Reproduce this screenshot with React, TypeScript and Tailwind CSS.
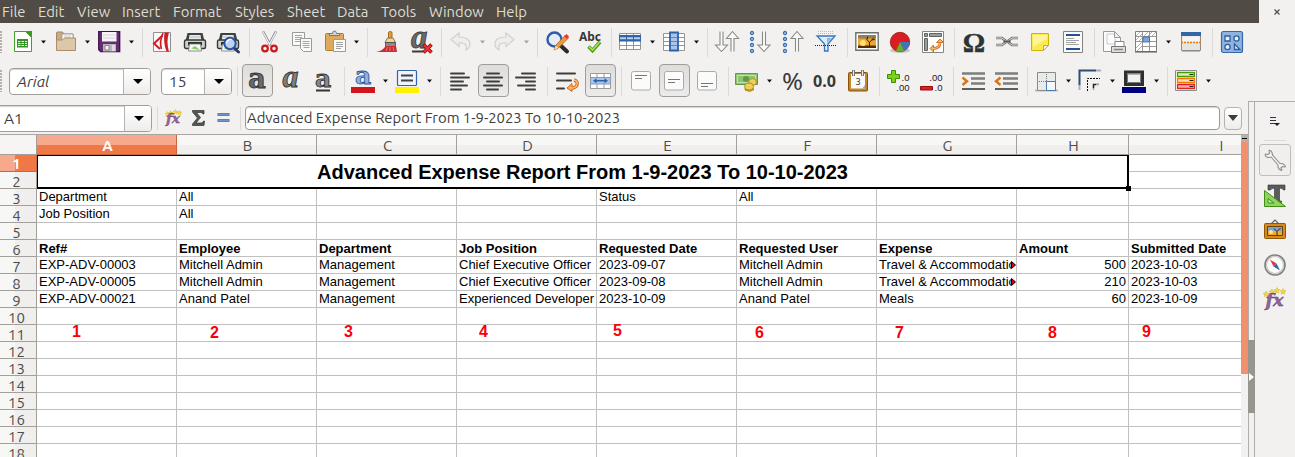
import React from "react";

type Kids = { children?: React.ReactNode };

const Svg = ({ children }: Kids) => (
  <svg width="24" height="24" viewBox="0 0 24 24" fill="none" className="block shrink-0 overflow-visible">
    {children}
  </svg>
);

const Tool = ({ children, on }: Kids & { on?: boolean }) => (
  <div className="relative flex h-[34px] w-[33px] shrink-0 items-center pl-1">
    {on && <div className="absolute top-0 left-px h-[33px] w-[31px] rounded-[4px] border border-[#a09d99] bg-gradient-to-b from-[#dfdddb] to-[#ecebea]" />}
    <div className="relative">
      <Svg>{children}</Svg>
    </div>
  </div>
);

const Drop = ({ children, dim }: Kids & { dim?: boolean }) => (
  <div className="flex h-[34px] w-11 shrink-0 items-center pl-1">
    <Svg>{children}</Svg>
    <svg width="5" height="4" viewBox="0 0 5 4" className={dim ? "ml-[7px] text-[#a3a19e]" : "ml-[7px] text-[#111]"}>
      <path d="M0 .5h5L2.5 3.5z" fill="currentColor" />
    </svg>
  </div>
);

const Sep = () => (
  <div className="flex w-2 shrink-0 justify-center">
    <div className="h-[29px] w-px bg-[#dcdad8]" />
  </div>
);

const Handle = () => (
  <div className="h-[22px] w-[6px] shrink-0">
    <div className="h-full w-[2px] bg-[repeating-linear-gradient(#b5b2ae_0px,#b5b2ae_2px,#f2f1f0_2px,#f2f1f0_3px)]" />
  </div>
);

const menus: [string, string][] = [
  ["File", "w-[36px]"],
  ["Edit", "w-[39px]"],
  ["View", "w-[45px]"],
  ["Insert", "w-[51px]"],
  ["Format", "w-[62px]"],
  ["Styles", "w-[52px]"],
  ["Sheet", "w-[50px]"],
  ["Data", "w-[44px]"],
  ["Tools", "w-[48px]"],
  ["Window", "w-[67px]"],
  ["Help", "w-[40px]"],
];

const MenuBar = () => (
  <div className="flex h-[23px]">
    <div className="flex w-[1259px] items-center bg-[#504c45] pt-px pl-[2px] text-[14.8px] leading-[22px] text-[#dfdbd2]">
      {menus.map(([m, w]) => (
        <span key={m} className={w + " shrink-0 whitespace-nowrap"}>
          {m}
        </span>
      ))}
    </div>
    <div className="flex flex-1 items-center justify-center">
      <svg width="6" height="6" viewBox="0 0 6 6" stroke="#55524d" strokeWidth="1.3">
        <path d="M.5.5l5 5M5.5.5l-5 5" />
      </svg>
    </div>
  </div>
);

const Printer = () => (
  <>
    <path d="M4.500 3h15l2 8H2.500z" fill="#3f4241" />
    <path d="M6.500 5h11l.8 5H5.700z" fill="#e9ebe9" />
    <path d="M6.500 7h11" stroke="#bbb" />
    <rect x="1.500" y="10" width="21" height="8.500" rx="1.500" fill="#cfd1cf" stroke="#353836" strokeWidth="1.400" />
    <path d="M5 12h14v3.500H5z" fill="#2d302e" />
    <path d="M6.500 14h11l1 7h-13z" fill="#f7f7f7" stroke="#777" strokeWidth=".8" />
    <path d="M8 18.500l4-2.500 5 4z" fill="#7ccf55" />
  </>
);

const ArrowDown = ({ x }: { x: number }) => (
  <path d={`M${x - 1.5} 1.500v13.500h-4.500L${x} 21.500l6-6.500h-4.500V1.500`} fill="#fafafa" stroke="#888a85" strokeWidth="1.100" />
);
const ArrowUp = ({ x }: { x: number }) => (
  <path d={`M${x - 1.5} 21.500V8.500h-4.500L${x} 1.500l6 7h-4.500v13`} fill="#fafafa" stroke="#888a85" strokeWidth="1.100" />
);
const Beads = () => (
  <g stroke="#3a6cb0" strokeWidth="1.300" fill="#dce9f8">
    <circle cx="4" cy="3" r="1.500" />
    <circle cx="4" cy="9" r="1.500" />
    <circle cx="4" cy="15" r="1.500" />
    <circle cx="4" cy="21" r="1.500" />
  </g>
);

const StandardBar = () => (
  <div className="flex h-[38px] items-center">
    <Handle />
    <Drop>
      <path d="M4.500 1.500h11l6 6v14h-17z" fill="#fff" stroke="#43a02a" />
      <path d="M15 1h7v7z" fill="#3d9a25" />
      <path d="M7 9h11v8.500H7z" fill="#37912a" />
      <path d="M8 11h2.500v1H8zm3.500 0H14v1h-2.500zM15 11h2v1h-2zM8 13h2.500v1H8zm3.500 0H14v1h-2.500zM15 13h2v1h-2zM8 15h2.500v1H8zm3.500 0H14v1h-2.500zM15 15h2v1h-2z" fill="#eaf8e4" />
    </Drop>
    <Drop>
      <path d="M2.500 19V3q0-1 1-1h5l1.500 2h9v14z" fill="#c5ac88" stroke="#a28560" />
      <path d="M8 4h11v7H8z" fill="#fafafa" stroke="#999" strokeWidth=".8" />
      <path d="M10 6h7M10 8h7" stroke="#bbb" strokeWidth=".8" />
      <path d="M2.500 20.500V10h6l2-2h11v12.500z" fill="#dcc8a9" stroke="#ab8e68" />
    </Drop>
    <Drop>
      <path d="M.7 1.700h21v20h-19l-2-2z" fill="#642e73" stroke="#3f1350" strokeWidth="1.300" />
      <path d="M4 2h14.500v9.500H4z" fill="#f7f4f8" />
      <path d="M5 5h12.500M5 8h12.500" stroke="#d5d0d8" />
      <path d="M5 14h13v7.500H5z" fill="#b9b6bb" />
      <path d="M7 15.500h4V20H7z" fill="#f4f4f4" stroke="#777" strokeWidth=".8" />
      <path d="M14 15h3v6h-3z" fill="#ddd" />
    </Drop>
    <Sep />
    <Tool>
      <path d="M3.500 2.500h17v19h-17z" fill="#fafafa" stroke="#8f9190" />
      <path d="M12.500 5.500L4 13.500l6 5.500" stroke="#cf1d22" strokeWidth="2" />
      <path d="M13 3q-4 9-1.500 16" stroke="#cf1d22" strokeWidth="1.600" />
      <path d="M14.500 2.500h4.500q-3 9 0 19h-2.500q-3.500-9-2-19z" fill="#cf1d22" />
    </Tool>
    <Tool>
      <Printer />
    </Tool>
    <Tool>
      <Printer />
      <path d="M18 18l4.500 4" stroke="#283b65" strokeWidth="3" strokeLinecap="round" />
      <circle cx="14" cy="13.500" r="5.700" fill="#bcd3ef" stroke="#2752a0" strokeWidth="2" />
      <path d="M10.500 13q1-4 5-3.500" stroke="#fff" strokeWidth="1.300" />
    </Tool>
    <Sep />
    <Tool>
      <path d="M6 1.500l7.500 14M19 1.500l-7.500 14" stroke="#8b8e8c" strokeWidth="2.600" />
      <path d="M6 2l7 13M19 2l-7 13" stroke="#f4f4f4" strokeWidth="1.200" />
      <circle cx="8" cy="18.500" r="2.800" stroke="#cb1a1e" strokeWidth="2.200" />
      <circle cx="17" cy="18.500" r="2.800" stroke="#cb1a1e" strokeWidth="2.200" />
    </Tool>
    <Tool>
      <path d="M2.500 2.500h12v13h-12z" fill="#fafafa" stroke="#9a9c99" />
      <path d="M5 5.500h7M5 7.500h7M5 9.500h5M5 11.500h5" stroke="#a5a7a4" />
      <path d="M10.500 8.500h11v13h-8l-3-3z" fill="#fafafa" stroke="#9a9c99" />
      <path d="M12.500 11.500h7M12.500 13.500h7M12.500 15.500h7M13.500 17.500h6" stroke="#a5a7a4" />
    </Tool>
    <Drop>
      <rect x="2.500" y="3.500" width="18" height="17" rx="1" fill="#dfa95b" stroke="#b17c2c" />
      <path d="M6.500 5.500v-2h3q0-2.500 2-2.500t2 2.500h3v2z" fill="#d5d7d3" stroke="#777" />
      <path d="M10.500 9.500h12v12h-12z" fill="#fafafa" stroke="#9a9c99" />
      <path d="M13 12.500h7M13 14.500h7M13 16.500h7M13 18.500h5" stroke="#a0a29f" />
    </Drop>
    <Sep />
    <Tool>
      <rect x="13.500" y="1.500" width="3.500" height="7" rx="1.500" fill="#e0a03a" stroke="#a2691a" />
      <path d="M12.500 8h5.500l2.500 4.500h-10.500z" fill="#f0d59b" stroke="#8c7241" />
      <path d="M10.500 12.500h10v4h-10z" fill="#8c8c8c" stroke="#444" strokeWidth=".8" />
      <path d="M10.500 16h10.500l1 6H1q7-1 9.500-6z" fill="#c82b34" />
      <path d="M12.500 17l-1.500 4M15 17v4M18 17l1 4" stroke="#f28a8e" strokeWidth=".8" />
    </Tool>
    <Tool>
      <text x="3" y="18" fontFamily="Liberation Serif" fontStyle="italic" fontWeight="700" fontSize="33" fill="#6a6a6a" stroke="#3c3c3c" strokeWidth=".8">a</text>
      <path d="M4 21.500h11" stroke="#3c3c3c" strokeWidth="2" />
      <path d="M15.500 14.500l8 8M23.500 14.500l-8 8" stroke="#a80000" strokeWidth="3.600" />
      <path d="M16 15l7 7M23 15l-7 7" stroke="#ee3432" strokeWidth="2" />
    </Tool>
    <Sep />
    <Drop dim>
      <path d="M2 9.500l8-6.500v4q11 0 11 7 0 4-4 6 2-8-7-7v3.500z" fill="#efeeec" stroke="#d1d0cd" strokeWidth="1.200" />
    </Drop>
    <Drop dim>
      <path d="M21 9.500L13 3v4q-11 0-11 7 0 4 4 6-2-8 7-7v3.500z" fill="#efeeec" stroke="#d1d0cd" strokeWidth="1.200" />
    </Drop>
    <Sep />
    <Tool>
      <path d="M14 14l8 7.500" stroke="#2a2a2a" strokeWidth="4" strokeLinecap="round" />
      <circle cx="9.500" cy="9.500" r="7" fill="#e6ecf5" stroke="#2f5ba7" strokeWidth="2.400" />
      <path d="M9 20l2-5L20.500 5l3 3-10 10z" fill="#eb9b3a" stroke="#a4621a" strokeWidth=".8" />
      <path d="M19 6.500L21.500 4l2.500 2.500-2 2.500z" fill="#e23a3a" />
      <path d="M9 20l1.800-4.500 2.500 2.300z" fill="#f4dfb5" />
    </Tool>
    <Tool>
      <text x="1" y="11" fontFamily="Noto Sans" fontWeight="700" fontSize="12" textLength="22" lengthAdjust="spacingAndGlyphs" fill="#383838">Abc</text>
      <path d="M10.500 16.500l4 4 7.500-8.500" stroke="#4c9a18" strokeWidth="3.600" />
      <path d="M11 16.700l3.500 3.300 7-7.800" stroke="#a8e060" strokeWidth="1.600" />
    </Tool>
    <Sep />
    <Drop>
      <path d="M.5 3.500h21v16H.500z" fill="#fff" stroke="#949693" />
      <path d="M7.500 3v17M14.500 3v17M0 15.500h22" stroke="#949693" />
      <path d="M0 5h22v6.500H0z" fill="#2e62aa" />
      <path d="M1 8.200h20" stroke="#b7d0ee" strokeWidth="2" strokeDasharray="6 1" />
    </Drop>
    <Drop>
      <path d="M.5 3.500h21v17H.500z" fill="#fff" stroke="#949693" />
      <path d="M0 7.500h22M0 11.500h22M0 15.500h22" stroke="#949693" />
      <path d="M7 2.500h8v18H7z" fill="#a9c6ea" stroke="#2e62aa" strokeWidth="1.800" />
      <path d="M8 7.500h6M8 11.500h6M8 15.500h6" stroke="#5d8bc8" />
    </Drop>
    <Sep />
    <Tool>
      <ArrowDown x={6.5} />
      <ArrowUp x={17.5} />
    </Tool>
    <Tool>
      <Beads />
      <ArrowDown x={16} />
    </Tool>
    <Tool>
      <Beads />
      <ArrowUp x={16} />
    </Tool>
    <Tool>
      <path d="M4 1.500h15M4 3.500h15" stroke="#bbb" strokeDasharray="1 1" />
      <path d="M3 6h18l-7 8v7h-3.500v-7z" fill="#dcebfa" stroke="#3b75bd" strokeWidth="1.300" />
      <path d="M13 8h5l-5 5z" fill="#8bb5e4" />
      <path d="M1 15.500h22" stroke="#222" strokeDasharray="1 1" />
    </Tool>
    <Sep />
    <Tool>
      <path d="M.8 2.800h22.400v17.400H.8z" fill="#fff" stroke="#6f716e" strokeWidth="1.400" />
      <path d="M3 5h18v13H3z" fill="#efa62c" />
      <path d="M3 5h18v3.500H3z" fill="#8d8160" />
      <path d="M3 15.500h18V18H3z" fill="#4d3006" />
      <circle cx="8" cy="13" r="3" fill="#ffe078" />
      <path d="M14.500 17v-5M14.500 12.500l-3.500-4M14.500 12.500l4.500-5M12.500 9V6.500M16.500 10l3.500-.5" stroke="#2c1a06" strokeWidth=".9" />
    </Tool>
    <Tool>
      <ellipse cx="12" cy="20.500" rx="10" ry="2.500" fill="#c7c5c3" />
      <circle cx="12" cy="12" r="9.700" fill="#d81e20" stroke="#a01010" strokeWidth=".8" />
      <path d="M12 12h9.700q0 6-5.700 9z" fill="#4473b8" />
      <path d="M12 12l4 9q-4 1.500-8 0z" fill="#62b52b" />
    </Tool>
    <Tool>
      <path d="M1.500 1.500h21v21h-21z" fill="#fff" stroke="#858784" />
      <path d="M3.500 3.500h3v3h-3zM8.500 3.500h12v3h-12zM3.500 8.500h3v12h-3z" fill="#9b9d9a" stroke="#626461" />
      <path d="M12 18.500q7 0 7-6" stroke="#d9731a" strokeWidth="2.800" />
      <path d="M9 18.500l3.500-3.500v7zM19 9l-3.500 3.500h7z" fill="#fbb066" stroke="#d9731a" />
      <path d="M12 18.500q7 0 7-6" stroke="#fbc288" />
    </Tool>
    <Sep />
    <Tool>
      <text x="12" y="21.500" textAnchor="middle" fontFamily="Liberation Serif" fontWeight="700" fontSize="28" fill="#2e3436" stroke="#2e3436" strokeWidth=".4">Ω</text>
    </Tool>
    <Tool>
      <path d="M1 8h6l4 3M1 15h6l4-3M23 8h-6l-4 3M23 15h-6l-4-3" stroke="#6d6f6c" strokeWidth="2.600" />
      <path d="M1 8h6l4 3M1 15h6l4-3M23 8h-6l-4 3M23 15h-6l-4-3" stroke="#dcdcdc" />
      <path d="M8.500 11.500h7" stroke="#555" strokeWidth="2" />
    </Tool>
    <Tool>
      <path d="M3.500 3.500h17v12l-5 5h-12z" fill="#fce94f" stroke="#cdb20a" />
      <path d="M5 5h14v4L5 17z" fill="#fff39a" />
      <path d="M20.500 15.500l-5 5v-5z" fill="#f8f8e8" stroke="#cdb20a" />
    </Tool>
    <Tool>
      <path d="M2.500 1.500h19v21h-19z" fill="#fafafa" stroke="#81837f" />
      <path d="M5 5h14M5 19h14" stroke="#27509a" strokeWidth="2.200" />
      <path d="M5 8.500h8M5 10.500h13M5 12.500h10M5 14.500h13" stroke="#999" strokeWidth=".9" />
    </Tool>
    <Sep />
    <Tool>
      <path d="M1.500 1.500h11l6 6v14h-17z" fill="#fbfbfb" stroke="#999b98" />
      <path d="M5 4h8v10H5z" stroke="#ccc" />
      <path d="M12.500 1.500v6h6z" fill="#eee" stroke="#999b98" />
      <path d="M13 11.500h9v5h-9z" fill="#fff" stroke="#888" />
      <path d="M9.500 16.500h14v6h-14z" fill="#ddd" stroke="#777" />
      <path d="M12 19.500h9" stroke="#888" strokeWidth="1.500" />
    </Tool>
    <Drop>
      <path d="M.5 1.500h21v20H.500z" fill="#fff" stroke="#7d7f7c" />
      <path d="M1 6l4-4M1 10l6-6M3 12l5-5M1 18l6-6M1 22l6-6M9 6l4-4M13 6l4-4M17 6l4-4" stroke="#8cb0dc" strokeWidth=".9" />
      <path d="M7.500 2v19M14.500 2v19M1 6.500h20M1 11.500h20M8 16.500h13" stroke="#999" />
      <path d="M8 7h6.500v5H8z" fill="#7ea6d9" stroke="#3465a4" strokeWidth=".8" />
      <path d="M0 22h22" stroke="#555" />
    </Drop>
    <Tool>
      <path d="M2.500 2.500h19v18h-19z" fill="#e4e4e3" stroke="#8a8c89" />
      <path d="M2 2h20v4H2z" fill="#3465a4" />
      <path d="M3.500 6.500h17v5h-17z" fill="#f4f4f4" />
      <path d="M2 12.500h21" stroke="#f57900" strokeWidth="1.300" strokeDasharray="2 1" />
      <path d="M3 21.500h18" stroke="#bbb" />
    </Tool>
    <Sep />
    <Tool>
      <rect x="1.500" y="1.500" width="21" height="21" rx="2" fill="#8fb3df" stroke="#3667a8" strokeWidth="1.200" />
      <g stroke="#2d5d9f" strokeWidth="1.300" fill="#e8f1fb">
        <path d="M5 6h5v5H5zM14.500 14v5.500H20z" />
        <circle cx="16.500" cy="8.500" r="2.600" />
        <circle cx="7.500" cy="17" r="2.600" />
      </g>
    </Tool>
  </div>
);

const Bars = ({ rows }: { rows: [number, number][] }) => (
  <>
    {rows.map(([x, w], i) => (
      <path key={i} d={`M${x} ${4.5 + i * 4}h${w}`} stroke="#3e403f" strokeWidth="2" strokeLinecap="round" />
    ))}
  </>
);

const Combo = ({ label, box, arrow, italic }: { label: string; box: string; arrow: string; italic?: boolean }) => (
  <div className={box + " flex h-[27px] shrink-0 items-stretch overflow-hidden border border-[#a19e9a] bg-white shadow-[inset_0_1px_1px_#d5d3d1]"}>
    <span className={(italic ? "italic " : "") + "flex-1 pl-[7px] text-[15.5px] leading-[25px] text-[#3c3c3c]"}>{label}</span>
    <div className={arrow + " flex items-center justify-center border-l border-[#b5b2ae] bg-gradient-to-b from-white to-[#eeedec] pl-px"}>
      <svg width="10" height="5" viewBox="0 0 10 5">
        <path d="M0 0h10L5 5z" fill="#000" />
      </svg>
    </div>
  </div>
);

const Align = ({ y }: { y: number }) => (
  <>
    <rect x="2.500" y="2.500" width="19" height="18.500" rx="2" fill="#fbfbfb" stroke="#a9aba8" />
    <path d={`M6 ${y}h12M6 ${y + 3}h7`} stroke="#777" />
  </>
);

const FormatBar = () => (
  <div className="flex h-[40px] items-center">
    <Handle />
    <Combo label="Arial" italic box="ml-[3px] w-[142px] rounded-[4px]" arrow="w-[27px]" />
    <Combo label="15" box="ml-[10px] w-[71px] rounded-[4px]" arrow="w-[27px]" />
    <div className="ml-[1px] flex items-center">
      <Sep />
      <Tool on>
        <text x="12" y="18.500" textAnchor="middle" fontFamily="DejaVu Serif" fontWeight="700" fontSize="27" fill="#6a6a6a" stroke="#333" strokeWidth=".9">a</text>
      </Tool>
      <Tool>
        <text x="12.500" y="18" textAnchor="middle" fontFamily="Liberation Serif" fontStyle="italic" fontWeight="700" fontSize="32" fill="#808080" stroke="#333" strokeWidth=".9">a</text>
      </Tool>
      <Tool>
        <text x="12" y="18" textAnchor="middle" fontFamily="DejaVu Serif" fontWeight="700" fontSize="25" fill="#888" stroke="#333" strokeWidth=".9">a</text>
        <path d="M5 21.500h14" stroke="#333" strokeWidth="2" />
      </Tool>
      <Sep />
      <Drop>
        <text x="11" y="15" textAnchor="middle" fontFamily="DejaVu Serif" fontWeight="700" fontSize="25" fill="#8db2de" stroke="#2c5ca0" strokeWidth=".9">a</text>
        <path d="M-1 18h24v6H-1z" fill="#d0151c" />
      </Drop>
      <Drop>
        <rect x="1.500" y="1.500" width="19" height="15" rx="1" fill="#eef4fb" stroke="#3465a4" strokeWidth="1.200" />
        <path d="M5 6.500h12M5 11.500h12" stroke="#444" strokeWidth="1.800" />
        <path d="M-1 18h24v6H-1z" fill="#fff200" />
      </Drop>
      <Sep />
      <Tool>
        <Bars rows={[[3, 13], [3, 18], [3, 12], [3, 16], [3, 10]]} />
      </Tool>
      <Tool on>
        <Bars rows={[[6, 12], [3, 18], [6, 12], [3, 18], [6, 11]]} />
      </Tool>
      <Tool>
        <Bars rows={[[8, 13], [2, 19], [12, 9], [4, 17], [12, 9]]} />
      </Tool>
      <Sep />
      <Tool>
        <path d="M2 4.500h18M2 11.500h14M2 19.500h7" stroke="#3e403f" strokeWidth="2" strokeLinecap="round" />
        <path d="M19 11q4 1 3 5-1 3-6 3" stroke="#cf6a12" strokeWidth="3.400" />
        <path d="M12 19l5-4.500v8z" fill="#fbb066" stroke="#cf6a12" />
        <path d="M19 11q4 1 3 5-1 3-6 3" stroke="#fcc083" strokeWidth="1.300" />
      </Tool>
      <Tool on>
        <path d="M2.500 4.500h20v15h-20z" fill="#fff" stroke="#999b98" />
        <path d="M9 4v16M16 4v16" stroke="#999b98" />
        <path d="M2.500 8.500h20v6.500h-20z" fill="#a9c6ea" stroke="#8a9bb0" />
        <path d="M7 11.700h11" stroke="#2e5ea4" strokeWidth="1.500" />
        <path d="M5 11.700l3.500-2.500v5zM20 11.700l-3.500-2.500v5z" fill="#2e5ea4" />
      </Tool>
      <Sep />
      <Tool>
        <Align y={6.5} />
      </Tool>
      <Tool on>
        <Align y={10.5} />
      </Tool>
      <Tool>
        <Align y={14.5} />
      </Tool>
      <Sep />
      <Drop>
        <path d="M-.5 4.500h22v11h-22z" fill="#8dc373" stroke="#5f9a46" />
        <path d="M1.500 6.500h18v7h-18z" stroke="#c3e3b2" />
        <circle cx="10" cy="10" r="3" fill="#5f9a46" />
        <g fill="#edcf5a" stroke="#a98618" strokeWidth=".9">
          <ellipse cx="16.500" cy="13" rx="4" ry="3.500" />
          <ellipse cx="13" cy="17.500" rx="4.300" ry="3.500" />
          <path d="M9 19.500q4 3.500 8.500 0v1.500q-4 3-8.500 0z" />
        </g>
      </Drop>
      <Tool>
        <text x="12.500" y="21" textAnchor="middle" fontFamily="Noto Sans" fontSize="24" textLength="21" lengthAdjust="spacingAndGlyphs" fill="#3a3a3a">%</text>
      </Tool>
      <Tool>
        <text x="11.500" y="17.500" textAnchor="middle" fontFamily="Noto Sans" fontWeight="700" fontSize="16" textLength="23" lengthAdjust="spacingAndGlyphs" fill="#383838">0.0</text>
      </Tool>
      <Tool>
        <rect x="2.500" y="3.500" width="19" height="18.500" rx="1" fill="#c4852c" stroke="#85530d" />
        <path d="M5 5h14v14.500H5z" fill="#fafafa" />
        <path d="M7.500 1v6M16.500 1v6" stroke="#777" strokeWidth="3" />
        <path d="M7.500 1.500v5M16.500 1.500v5" stroke="#eee" />
        <text x="12" y="16" textAnchor="middle" fontFamily="Noto Sans" fontSize="9" fill="#333">3</text>
        <path d="M19 16l-3 3.500h3z" fill="#aaa" />
      </Tool>
      <Sep />
      <Tool>
        <path d="M4.500 1.500h4v4h4v4h-4v4h-4v-4H.5v-4h4z" fill="#79d419" stroke="#3f8d06" />
        <text x="22.500" y="12" textAnchor="end" fontFamily="Liberation Sans" fontSize="9.500" fill="#222">.0</text>
        <text x="22.500" y="22" textAnchor="end" fontFamily="Liberation Sans" fontSize="9.500" fill="#222">.00</text>
      </Tool>
      <Tool>
        <path d="M.5 17.500h12v3.500H.500z" fill="#dd1e22" stroke="#9c0a0a" />
        <text x="22.500" y="12" textAnchor="end" fontFamily="Liberation Sans" fontSize="9.500" fill="#222">.00</text>
        <text x="22.500" y="22" textAnchor="end" fontFamily="Liberation Sans" fontSize="9.500" fill="#222">.0</text>
      </Tool>
      <Sep />
      <Tool>
        <path d="M1 4.500h23M10 9.500h14M10 14.500h14M1 20h23" stroke="#3e403f" strokeWidth="2.200" />
        <path d="M1 4.500h23M10 9.500h14M10 14.500h14M1 20h23" stroke="#aaa" strokeWidth=".6" />
        <path d="M1.500 8.500l4.500 3.700-4.500 3.800" stroke="#d9731a" strokeWidth="2.400" />
      </Tool>
      <Tool>
        <path d="M1 4.500h23M9 9.500h15M9 14.500h15M1 20h23" stroke="#3e403f" strokeWidth="2.200" />
        <path d="M1 4.500h23M9 9.500h15M9 14.500h15M1 20h23" stroke="#aaa" strokeWidth=".6" />
        <path d="M6.500 8.500L2 12.200 6.500 16" stroke="#d9731a" strokeWidth="2.400" />
      </Tool>
      <Sep />
      <Drop>
        <path d="M0 21.500h23" stroke="#bbb" strokeWidth="2" />
        <path d="M2.500 3.500h18v18h-18z" fill="#e8ebe7" stroke="#888a87" />
        <path d="M4 12.500h9M11.500 5v8" stroke="#777" strokeDasharray="1 1" />
        <path d="M11.500 12.500h9v9h-9z" fill="#f5f9fd" stroke="#4a7ab4" />
      </Drop>
      <Drop>
        <path d="M.5 21V1.500H22" stroke="#2c4d74" strokeWidth="2" />
        <path d="M8.500 22V9.500H21" stroke="#111" strokeDasharray="2 1" />
        <path d="M14.500 21v-5.500H20" stroke="#222" strokeWidth="1.500" />
        <path d="M-1 16h3v7h-3zM17 0h6v3h-6zM17 15h4v2h-4zM13 19h3v3h-3z" fill="#f2f1f0" opacity=".6" />
      </Drop>
      <Drop>
        <path d="M2.500 3h17v12.500h-17z" fill="#f2f1f0" stroke="#2e3030" strokeWidth="3" />
        <path d="M4.500 5h13v8.500h-13z" stroke="#777" />
        <path d="M-1 18h24v6H-1z" fill="#000080" />
      </Drop>
      <Sep />
      <Drop>
        <path d="M.5 1.500h21v20H.500z" fill="#fff" stroke="#8a8c89" />
        <path d="M2.500 3.500h17v4h-17z" fill="#d9efc4" stroke="#4e9a06" strokeWidth="1.300" />
        <path d="M2.500 9.500h17v4h-17z" fill="#fde0b8" stroke="#f57900" strokeWidth="1.300" />
        <path d="M2.500 15.500h17v4h-17z" fill="#f8a8a8" stroke="#dc2626" strokeWidth="1.300" />
        <path d="M14.500 5.500h4M14.500 11.500h4M14.500 17.500h4" stroke="#222" />
      </Drop>
    </div>
  </div>
);

const Star = ({ x, y }: { x: number; y: number }) => (
  <path transform={`translate(${x} ${y})`} d="M0-3l.9 2 2.100.2-1.600 1.400.5 2.200L0 1.600l-1.900 1.200.5-2.200L-3-.8l2.100-.2z" fill="#f5d93a" stroke="#c9a30b" strokeWidth=".4" />
);

const FormulaBar = () => (
  <div className="flex h-[33px] items-center pt-px">
    <Combo label="A1" box="-ml-[4px] w-[156px] rounded-[4px]" arrow="w-[27px]" />
    <div className="ml-[5px] h-[23px] w-px bg-[#dcdad8]" />
    <svg width="18" height="18" viewBox="0 0 18 18" className="ml-[7px] overflow-visible">
      <g transform="translate(0 1) scale(.8)">
        <Star x={7} y={4} />
        <Star x={13} y={2.500} />
        <Star x={18} y={3.500} />
        <Star x={3} y={5} />
      </g>
      <text x="1" y="13.500" fontFamily="DejaVu Serif" fontStyle="italic" fontWeight="700" fontSize="13" textLength="14" lengthAdjust="spacingAndGlyphs" fill="#93659a" stroke="#5c3566" strokeWidth=".3">fx</text>
    </svg>
    <svg width="13" height="16" viewBox="0 0 13 16" className="ml-[9px] overflow-visible">
      <path d="M.5.5h11.500v3.500h-1q-.5-1.500-2-1.500H4.500l4 5-4.500 5.500h5q2 0 2.500-2h1l-.5 4.500H.5v-1.500L5.500 8 .5 2z" fill="#555753" stroke="#2e3436" strokeWidth=".7" />
    </svg>
    <svg width="13" height="10" viewBox="0 0 13 10" className="ml-[12px]">
      <path d="M.5 1.500h12M.5 7.500h12" stroke="#2c5a9c" strokeWidth="2.600" />
      <path d="M1 1.500h11M1 7.500h11" stroke="#7fa6d6" strokeWidth=".8" />
    </svg>
    <div className="ml-[10px] h-[23px] w-px bg-[#dcdad8]" />
    <div className="ml-[4px] h-[24px] w-[975px] rounded-[4px] border border-[#9c9995] bg-white pl-px text-[14.850px] leading-[22px] whitespace-nowrap text-[#3c3c3c] shadow-[inset_0_1px_1px_#d5d3d1]">
      Advanced Expense Report From 1-9-2023 To 10-10-2023
    </div>
    <div className="ml-[4px] flex h-[23px] w-[18px] items-center justify-center rounded-[4px] border border-[#b5b2ae] bg-gradient-to-b from-white to-[#eeedec]">
      <svg width="10" height="6" viewBox="0 0 10 6">
        <path d="M0 0h10L5 6z" fill="#3c3c3c" />
      </svg>
    </div>
  </div>
);

const cols = "grid shrink-0 grid-cols-[37px_repeat(7,140px)_112px_184px]";
const letters = ["A", "B", "C", "D", "E", "F", "G", "H", "I"];

const data: Record<number, string[]> = {
  3: ["Department", "All", "", "", "Status", "All"],
  4: ["Job Position", "All"],
  6: ["Ref#", "Employee", "Department", "Job Position", "Requested Date", "Requested User", "Expense", "Amount", "Submitted Date"],
  7: ["EXP-ADV-00003", "Mitchell Admin", "Management", "Chief Executive Officer", "2023-09-07", "Mitchell Admin", "Travel & Accommodation", "500", "2023-10-03"],
  8: ["EXP-ADV-00005", "Mitchell Admin", "Management", "Chief Executive Officer", "2023-09-08", "Mitchell Admin", "Travel & Accommodation", "210", "2023-10-03"],
  9: ["EXP-ADV-00021", "Anand Patel", "Management", "Experienced Developer", "2023-10-09", "Anand Patel", "Meals", "60", "2023-10-09"],
};

const RowHead = ({ n, on }: { n: number; on?: boolean }) => (
  <div
    className={
      on
        ? "h-[17px] border-r border-b border-[#c9663e] bg-[linear-gradient(90deg,#f7a98e_15px,#f07746_15px)] pr-[3px] text-center text-[15px] leading-[18px] font-bold text-white"
        : "h-[17px] border-r border-b border-[#a3a09b] bg-[linear-gradient(90deg,#f7f7f6_15px,#f0efee_15px)] pr-[3px] text-center text-[15px] leading-[19px] text-[#4c4c4c]"
    }
  >
    {n}
  </div>
);

const notes: [string, string][] = [
  ["1", "left-[72px] top-[188px]"],
  ["2", "left-[210px] top-[189px]"],
  ["3", "left-[344px] top-[188px]"],
  ["4", "left-[479px] top-[188px]"],
  ["5", "left-[613px] top-[187px]"],
  ["6", "left-[755px] top-[189px]"],
  ["7", "left-[895px] top-[189px]"],
  ["8", "left-[1048px] top-[189px]"],
  ["9", "left-[1142px] top-[188px]"],
];

const Sheet = () => (
  <div className="relative flex w-[1241px] flex-col overflow-hidden bg-white">
    <div className={cols + " h-[20px] grid-rows-[20px]"}>
      <div className="border-r border-b border-[#a3a09b] bg-[#f6f5f4]" />
      {letters.map((l, i) => (
        <div
          key={l}
          className={
            i === 0
              ? "border-r border-b border-[#c9663e] bg-[linear-gradient(#f7a98e_10px,#f07746_10px)] pl-[2px] text-center text-[15px] leading-[21px] font-bold text-white"
              : "border-r border-b border-[#a3a09b] bg-[linear-gradient(#f7f7f6_10px,#f0efee_10px)] pl-[2px] text-center text-[15px] leading-[21px] text-[#4c4c4c]"
          }
        >
          {l}
        </div>
      ))}
    </div>
    <div className="relative z-10 flex h-[34px] shrink-0">
      <div className="w-[37px]">
        <RowHead n={1} on />
        <RowHead n={2} />
      </div>
      <div className="relative w-[1092px] border-t border-r-2 border-b-2 border-l border-black text-center font-['Liberation_Sans',Arial,sans-serif] text-[20px] leading-[33px] font-bold text-black">
        Advanced Expense Report From 1-9-2023 To 10-10-2023
        <div className="absolute -right-[4px] -bottom-[4px] h-[5px] w-[5px] bg-black" />
      </div>
      <div className="flex-1">
        <div className="h-[17px] border-b border-[#c0c0c0]" />
        <div className="h-[17px] border-b border-[#c0c0c0]" />
      </div>
    </div>
    {Array.from({ length: 16 }, (_, k) => k + 3).map((n) => (
      <div key={n} className={cols}>
        <RowHead n={n} />
        {letters.map((l, i) => {
          const v = data[n]?.[i] ?? "";
          const more = v.startsWith("Travel");
          return (
            <div
              key={l}
              className={
                "relative h-[17px] overflow-hidden border-r border-b border-[#c0c0c0] px-[2px] font-['Liberation_Sans',Arial,sans-serif] text-[13px] whitespace-nowrap text-black " +
                (n === 6 ? "leading-[17px] font-bold" : "leading-[15px]") +
                (i === 7 && n > 6 ? " text-right" : "")
              }
            >
              {v}
              {more && (
                <svg width="5" height="8" viewBox="0 0 5 8" className="absolute top-[4px] right-0 bg-white">
                  <path d="M.5.5L4.500 4 .5 7.500z" fill="#e00000" stroke="#000" />
                </svg>
              )}
            </div>
          );
        })}
      </div>
    ))}
    {notes.map(([t, p]) => (
      <span key={t} className={p + " absolute font-['Liberation_Sans',Arial,sans-serif] text-[16px] leading-[18px] font-bold text-[#fb0007]"}>
        {t}
      </span>
    ))}
  </div>
);

const wrench = "M2 6Q2.500 9.500 5.500 9.500L8 9 15 17Q14.500 21.500 19 22.500M6 2Q9.500 3 9.500 7L17 15.500Q21.500 15 22.500 19";

const Sidebar = () => (
  <div className="flex w-[40px] flex-col items-center border-t border-[#b0ada9]">
    <svg width="10" height="10" viewBox="0 0 10 10" className="mt-[15px]">
      <path d="M0 .5h6M0 3.500h6M0 6.500h5" stroke="#33333f" />
      <path d="M4 6h6L7 9z" fill="#1c1c3a" />
    </svg>
    <div className="mt-[13px] h-px w-[22px] bg-[#dcdad8]" />
    <div className="mt-[3px] flex h-[32px] w-[32px] items-center justify-center rounded-[3px] border border-[#c0bdba] bg-[#f0efee]">
      <Svg>
        <path d="M7 7.500l10 10.500" stroke="#fafafa" strokeWidth="3" />
        <path d={wrench} stroke="#8b8d8a" strokeWidth="1.100" />
        <path d="M2 6L5 6.500 6.500 5 6 2M22.500 19l-3-.5-1.500 1.500 1 2.500" fill="#f0efee" stroke="#8b8d8a" strokeWidth="1.100" />
      </Svg>
    </div>
    <div className="mt-[7px] mr-[3px] flex h-[26px] items-center">
      <Svg>
        <path d="M6 1h17v5h-1.500q-1-2-4-2v13h2v1.500h-9V17h2V4q-3 0-4 2H6z" fill="#5a5d5c" stroke="#2c2f2e" strokeWidth=".6" />
        <path d="M2.500 6.500v16h21z" fill="#8fd45c" stroke="#3f8f14" />
        <path d="M6 14.500V19h6z" fill="#c8ecb0" stroke="#3f8f14" />
      </Svg>
    </div>
    <div className="mt-[8px] flex h-[26px] items-center">
      <Svg>
        <path d="M8 6l4-4 4 4" stroke="#666" strokeWidth="1.200" />
        <rect x="1.500" y="5.500" width="21" height="15" rx="1" fill="#d38a20" stroke="#8f5902" />
        <path d="M4.500 8.500h15v9h-15z" fill="#7ba4cf" stroke="#6b4204" />
        <path d="M5 13h14v4H5z" fill="#f5a930" />
        <circle cx="8" cy="14" r="2" fill="#ffe68c" />
        <path d="M14 17.500v-4l-3-3M14 13.500l3.500-3.500" stroke="#3a2608" />
      </Svg>
    </div>
    <div className="mt-[9px] flex h-[26px] items-center">
      <Svg>
        <circle cx="12" cy="12" r="10" fill="#fcfcfc" stroke="#7e807d" strokeWidth="1.600" />
        <circle cx="12" cy="12" r="8.500" stroke="#c5c7c4" strokeWidth="1.200" />
        <path d="M7 6.500l6.500 4-3 3z" fill="#e03a3e" />
        <path d="M17 17.500l-6.500-4 3-3z" fill="#34659f" />
      </Svg>
    </div>
    <div className="mt-[8px] flex h-[26px] items-center">
      <Svg>
        <Star x={3} y={7} />
        <Star x={9} y={5} />
        <Star x={14} y={3.500} />
        <Star x={20} y={4.500} />
        <text x="2.500" y="19" fontFamily="DejaVu Serif" fontStyle="italic" fontWeight="700" fontSize="17" textLength="18" lengthAdjust="spacingAndGlyphs" fill="#93659a" stroke="#5c3566" strokeWidth=".4">fx</text>
      </Svg>
    </div>
  </div>
);

export default function App() {
  return (
    <div className="h-[457px] w-[1295px] overflow-hidden bg-[#f2f1f0] font-['Ubuntu','Noto_Sans',sans-serif]">
      <MenuBar />
      <StandardBar />
      <FormatBar />
      <div className="flex h-[356px]">
        <div className="flex w-[1248px] flex-col">
          <FormulaBar />
          <div className="flex h-[323px] border-t border-[#a9a6a2]">
            <Sheet />
            <div className="w-[7px]">
              <div className="flex h-[7px] items-center justify-center bg-[#b5b2ae]">
                <div className="h-px w-[5px] bg-black" />
              </div>
              <div className="h-[232px] bg-[#f28f6c]" />
            </div>
          </div>
        </div>
        <div className="w-[7px] border-x border-t border-[#b0ada9] pt-[238px]">
          <div className="-mx-px flex h-[73px] items-center justify-center bg-[#98948e]">
            <svg width="5" height="8" viewBox="0 0 5 8">
              <path d="M0 0l5 4-5 4z" fill="#fff" />
            </svg>
          </div>
        </div>
        <Sidebar />
      </div>
    </div>
  );
}
